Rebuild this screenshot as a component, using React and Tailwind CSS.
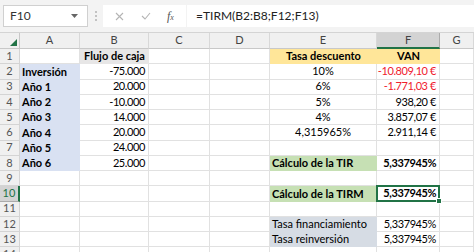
import React from "react";

const cols = ["A", "B", "C", "D", "E", "F", "G"];

// cell styles per column/row: [text, align, extra classes]
const rows = [
  { B: ["Flujo de caja", "center", "font-bold bg-[#e7e6e6]"], E: ["Tasa descuento", "center", "font-bold bg-[#ffe699]"], F: ["VAN", "center", "font-bold bg-[#ffe699]"] },
  { A: ["Inversión", "left", "font-bold bg-[#d9e1f2]"], B: ["-75.000", "right"], E: ["10%", "center"], F: ["-10.809,10 €", "right", "text-[#f0202c]"] },
  { A: ["Año 1", "left", "font-bold bg-[#d9e1f2]"], B: ["20.000", "right"], E: ["6%", "center"], F: ["-1.771,03 €", "right", "text-[#f0202c]"] },
  { A: ["Año 2", "left", "font-bold bg-[#d9e1f2]"], B: ["-10.000", "right"], E: ["5%", "center"], F: ["938,20 €", "right"] },
  { A: ["Año 3", "left", "font-bold bg-[#d9e1f2]"], B: ["14.000", "right"], E: ["4%", "center"], F: ["3.857,07 €", "right"] },
  { A: ["Año 4", "left", "font-bold bg-[#d9e1f2]"], B: ["20.000", "right"], E: ["4,315965%", "center"], F: ["2.911,14 €", "right"] },
  { A: ["Año 5", "left", "font-bold bg-[#d9e1f2]"], B: ["24.000", "right"] },
  { A: ["Año 6", "left", "font-bold bg-[#d9e1f2]"], B: ["25.000", "right"], E: ["Cálculo de la TIR", "left", "font-bold bg-[#c6e0b4]"], F: ["5,337945%", "right", "font-bold"] },
  {},
  { E: ["Cálculo de la TIRM", "left", "font-bold bg-[#c6e0b4]"], F: ["5,337945%", "right", "font-bold", true] },
  {},
  { E: ["Tasa financiamiento", "left", "bg-[#d6dce4]"], F: ["5,337945%", "right"] },
  { E: ["Tasa reinversión", "left", "bg-[#d6dce4]"], F: ["5,337945%", "right"] },
  {},
];

const alignCls = { left: "justify-start pl-[2px]", right: "justify-end pr-[3px] tracking-[-0.4px]", center: "justify-center" };

function Cell({ data }) {
  if (!data) return <div className="h-[15.25px] border-r border-b border-[#e1e1e1]" />;
  const [text, align, extra = "", selected] = data;
  const filled = extra.includes("bg-");
  return (
    <div
      className={`relative h-[15.25px] flex items-center whitespace-nowrap overflow-visible ${alignCls[align]} ${extra} ${
        filled ? "" : "border-r border-b border-[#e1e1e1]"
      }`}
    >
      {selected && (
        <div className="absolute -left-px -top-px right-[-1px] bottom-[-1px] border-2 border-[#217346]">
          <div className="absolute -right-[4px] -bottom-[4px] w-[6px] h-[6px] bg-[#217346] border border-white" />
        </div>
      )}
      <span className="relative">{text}</span>
    </div>
  );
}

export default function App() {
  return (
    <div className="w-[474px] h-[252px] overflow-hidden bg-white font-['Lato',sans-serif] text-[11px] text-black">
      <div className="h-[33px] bg-[#f3f3f3] flex items-center border-b border-[#d4d4d4]">
        <div className="ml-[3px] w-[85px] h-[22px] bg-white border border-[#d0d0d0] flex items-center justify-between pl-[6px] pr-[9px] text-[12px] text-[#333]">
          <span>F10</span>
          <svg width="7" height="4" viewBox="0 0 7 4"><path d="M0 0h7L3.5 4z" fill="#666" /></svg>
        </div>
        <div className="w-[15px] flex flex-col items-center gap-[2px]">
          <div className="w-[2px] h-[2px] bg-[#c2c2c2]" />
          <div className="w-[2px] h-[2px] bg-[#c2c2c2]" />
          <div className="w-[2px] h-[2px] bg-[#c2c2c2]" />
        </div>
        <div className="w-[83px] h-[22px] bg-white flex items-center text-[#a8a8a8]">
          <svg className="ml-[12px]" width="9" height="9" viewBox="0 0 9 9"><path d="M1 1l7 7M8 1L1 8" stroke="#b4b4b4" strokeWidth="1.1" /></svg>
          <svg className="ml-[17px]" width="10" height="8" viewBox="0 0 10 8"><path d="M1 4l3 3 5-6" stroke="#b4b4b4" strokeWidth="1.1" fill="none" /></svg>
          <span className="ml-[16px] italic font-['Liberation_Serif',serif] text-[12px] text-[#555]">
            f<span className="text-[8px]">x</span>
          </span>
        </div>
        <div className="flex-1 h-[22px] bg-white ml-px flex items-center pl-[9px] text-[12px] text-[#222]">
          =TIRM(B2:B8;F12;F13)
        </div>
      </div>

      <div className="grid grid-cols-[20px_60px_69px_61px_60px_107px_63px_1fr]">
        <div className="relative h-[16px] bg-[#f0f0f0] border-r border-b border-[#c8c8c8]">
          <svg className="absolute right-[2px] bottom-[2px]" width="7" height="7" viewBox="0 0 7 7"><path d="M7 0v7H0z" fill="#217346" /></svg>
        </div>
        {cols.map((c) => (
          <div
            key={c}
            className={`h-[16px] flex items-center justify-center text-[11px] text-[#444] border-r ${
              c === "F" ? "bg-[#d3d3d3] border-b-2 border-b-[#217346] border-r-[#ababab]" : "bg-[#f0f0f0] border-b border-b-[#c8c8c8] border-r-[#d8d8d8]"
            }`}
          >
            {c}
          </div>
        ))}
        {rows.map((r, i) => (
          <React.Fragment key={i}>
            <div
              className={`h-[15.25px] flex items-center justify-center text-[11px] ${
                i === 9
                  ? "bg-[#d3d3d3] text-[#217346] border-r-2 border-r-[#217346] border-b border-b-[#ababab]"
                  : "bg-[#f0f0f0] text-[#555] border-r border-b border-[#d4d4d4]"
              }`}
            >
              {i + 1}
            </div>
            {cols.map((c) => (
              <Cell key={c} data={r[c]} />
            ))}
          </React.Fragment>
        ))}
      </div>
    </div>
  );
}
